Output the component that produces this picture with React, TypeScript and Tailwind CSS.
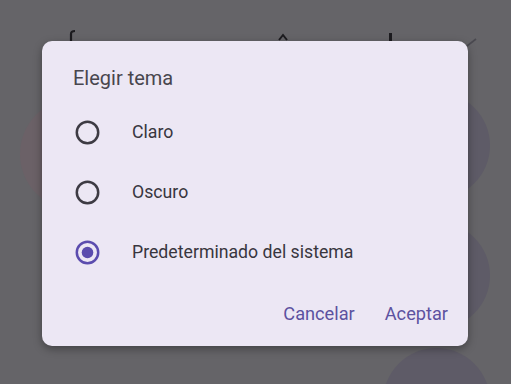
import { useState } from "react";

const OPTIONS = ["Claro", "Oscuro", "Predeterminado del sistema"];

function Radio({ checked }: { checked: boolean }) {
  return (
    <svg width="25" height="25" viewBox="0 0 25 25" className="shrink-0">
      <circle
        cx="12.5" cy="12.5" r="10.7" fill="none"
        stroke={checked ? "#5b4cae" : "#3d3b43"} strokeWidth="2.5"
      />
      {checked && <circle cx="12.5" cy="12.5" r="5.8" fill="#5b4cae" />}
    </svg>
  );
}

export default function App() {
  const [theme, setTheme] = useState(2);

  return (
    <div className="relative w-[511px] h-[384px] overflow-hidden bg-[#656468] font-['Roboto',_'Noto_Sans',_sans-serif]">
      {/* blurred app content behind the scrim */}
      <div className="absolute left-[20px] top-[98px] w-[112px] h-[112px] rounded-full bg-[#6b6167]" />
      <div className="absolute left-[383px] top-[92px] w-[107px] h-[107px] rounded-full bg-[#5e5b67]" />
      <div className="absolute left-[383px] top-[222px] w-[107px] h-[107px] rounded-full bg-[#5e5b67]" />
      <div className="absolute left-[383px] top-[348px] w-[107px] h-[107px] rounded-full bg-[#5e5b67]" />
      <svg className="absolute left-[68px] top-[29px]" width="10" height="14" viewBox="0 0 10 14">
        <path d="M3 14 V5 Q3 2 7 2" fill="none" stroke="#1c1b1f" strokeWidth="2.2" />
      </svg>
      <svg className="absolute left-[277px] top-[32px]" width="12" height="10" viewBox="0 0 12 10">
        <path d="M2 8 L6 3 L10 8" fill="none" stroke="#1c1b1f" strokeWidth="2" />
      </svg>
      <div className="absolute left-[389px] top-[33px] w-[2.5px] h-[9px] bg-[#1c1b1f]" />
      <svg className="absolute left-[466px] top-[38px]" width="12" height="10" viewBox="0 0 12 10">
        <path d="M1 8 L10 1" fill="none" stroke="#4a4950" strokeWidth="1.6" />
      </svg>

      {/* dialog */}
      <div className="relative ml-[42px] mt-[41px] w-[426px] h-[305px] rounded-[10px] bg-[#ece7f4] shadow-[0_3px_8px_rgba(0,0,0,0.35)] pl-[31px] pr-[20px] pt-[23px]">
        <h2 className="text-[20px] leading-[28px] text-[#48464e]">Elegir tema</h2>
        <div className="mt-[10px] flex flex-col">
          {OPTIONS.map((o, i) => (
            <button
              key={o}
              onClick={() => setTheme(i)}
              className="h-[60px] flex items-center gap-[32px] pl-[2px] text-left"
            >
              <Radio checked={theme === i} />
              <span className="text-[17.7px] leading-[24px] text-[#38363e]">{o}</span>
            </button>
          ))}
        </div>
        <div className="mt-[20px] flex justify-end gap-[30px] text-[18.2px] leading-[24px] text-[#5c52a0]">
          <button>Cancelar</button>
          <button>Aceptar</button>
        </div>
      </div>
    </div>
  );
}
